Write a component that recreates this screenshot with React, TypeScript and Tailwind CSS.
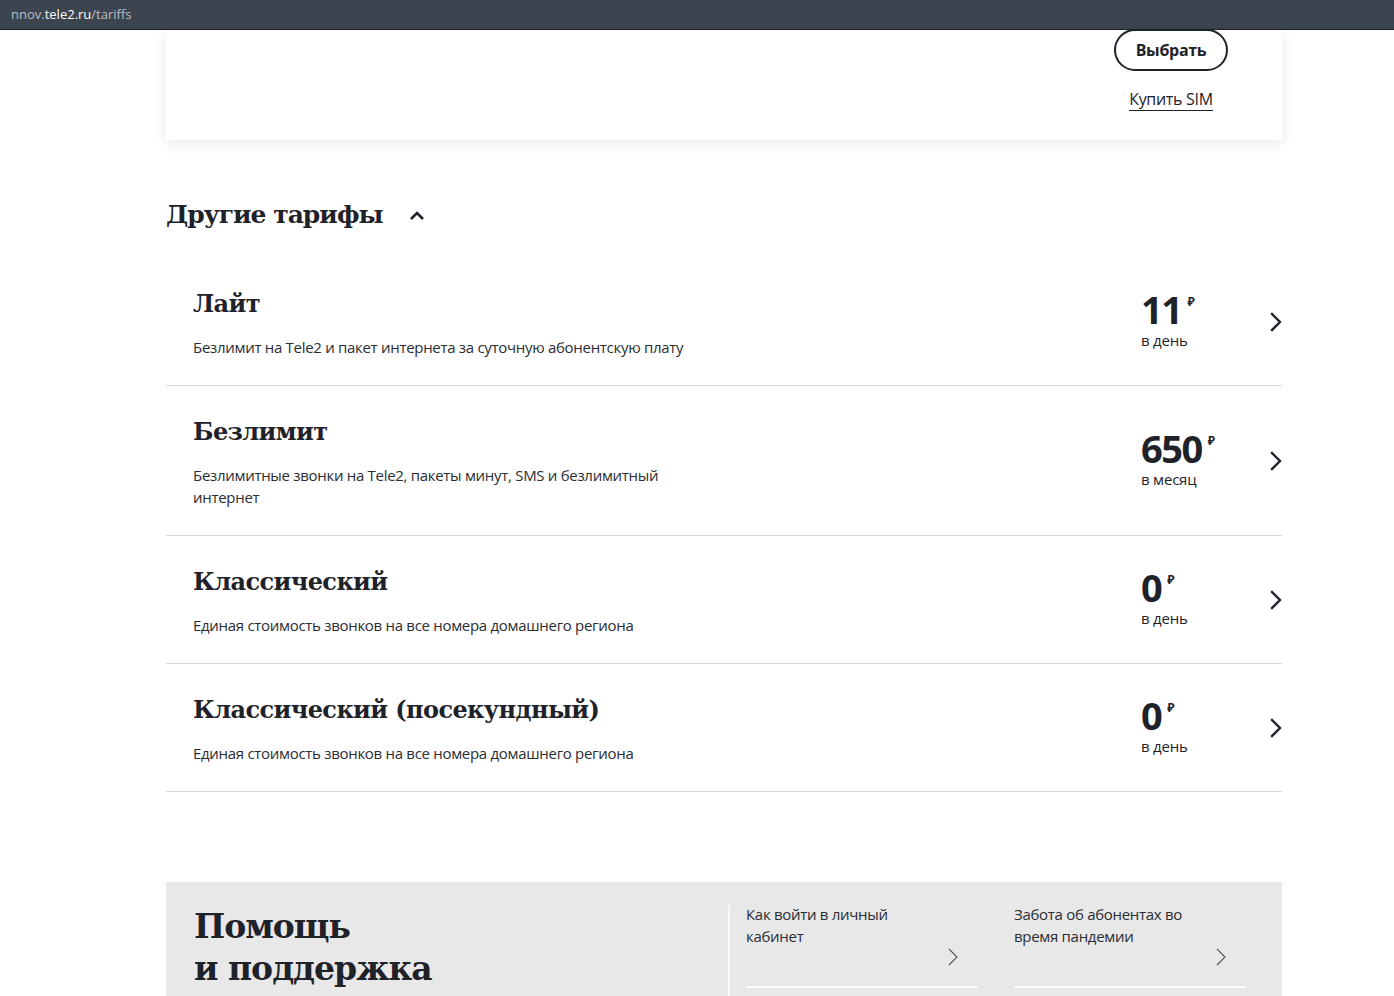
import React from "react";

const serif = { fontFamily: '"DejaVu Serif", serif' } as React.CSSProperties;

function Chevron({ className = "" }: { className?: string }) {
  return (
    <svg width="12" height="20" viewBox="0 0 12 20" className={className} fill="none">
      <path d="M2 2l8 8-8 8" stroke="#1f2229" strokeWidth="2.4" strokeLinecap="square" />
    </svg>
  );
}

function ThinChevron() {
  return (
    <svg width="10" height="18" viewBox="0 0 10 18" fill="none">
      <path d="M1 1l8 8-8 8" stroke="#555" strokeWidth="1.1" />
    </svg>
  );
}

type Tariff = { title: string; desc: string; price: string; per: string };

const tariffs: Tariff[] = [
  { title: "Лайт", desc: "Безлимит на Tele2 и пакет интернета за суточную абонентскую плату", price: "11", per: "в день" },
  { title: "Безлимит", desc: "Безлимитные звонки на Tele2, пакеты минут, SMS и безлимитный интернет", price: "650", per: "в месяц" },
  { title: "Классический", desc: "Единая стоимость звонков на все номера домашнего региона", price: "0", per: "в день" },
  { title: "Классический (посекундный)", desc: "Единая стоимость звонков на все номера домашнего региона", price: "0", per: "в день" },
];

export default function App() {
  return (
    <div className="min-h-[996px] bg-white text-[#1f2229]" style={{ fontFamily: '"Open Sans", "Noto Sans", sans-serif' }}>
      <div className="h-[30px] bg-[#3c4450] border-b border-[#1d2128] flex items-center pl-[11px] text-[13px] text-[#b9bec6]">
        <span>nnov.</span>
        <span className="text-white">tele2.ru</span>
        <span>/tariffs</span>
      </div>

      <div className="ml-[166px] w-[1116px]">
        <div className="bg-white h-[110px] shadow-[0_4px_14px_rgba(0,0,0,0.09)] flex justify-end pr-[54px]">
          <div className="flex flex-col items-center -mt-[1px]">
            <button className="w-[114px] h-[42px] rounded-full border-2 border-[#1f2229] text-[16px] font-bold tracking-[-0.3px]">Выбрать</button>
            <span className="mt-[17px] text-[16px] border-b border-[#1f2229] leading-[22px] tracking-[-0.3px]">Купить SIM</span>
          </div>
        </div>

        <div className="mt-[57px] flex items-center h-[36px]">
          <h2 className="text-[25px] font-bold tracking-[-1px]" style={serif}>Другие тарифы</h2>
          <svg width="16" height="10" viewBox="0 0 16 10" className="ml-[26px] mt-[2px]" fill="none">
            <path d="M2 8l6-6 6 6" stroke="#1f2229" strokeWidth="2.6" />
          </svg>
        </div>

        <div className="mt-[25px]">
          {tariffs.map((t) => (
            <div key={t.title} className="flex items-center border-b border-[#d9d9d9] pl-[27px]">
              <div className="flex-1 pt-[30px] pb-[27px]">
                <div className="text-[24px] font-bold leading-[32px] tracking-[-0.6px]" style={serif}>{t.title}</div>
                <div className="mt-[16px] text-[15px] leading-[22px] max-w-[510px] tracking-[-0.3px] text-[#2a2d33]">{t.desc}</div>
              </div>
              <div className="w-[129px] flex flex-col pb-[3px]">
                <div className="flex items-start h-[38px]">
                  <span className="text-[38px] font-bold leading-[38px] tracking-[-1.5px]">{t.price}</span>
                  <span className="ml-[6px] text-[12px] font-bold leading-[12px] mt-[6px]">₽</span>
                </div>
                <span className="text-[15px] leading-[20px] mt-[2px] tracking-[-0.2px]">{t.per}</span>
              </div>
              <Chevron />
            </div>
          ))}
        </div>

        <div className="mt-[90px] bg-[#e8e8e8] h-[114px] flex">
          <div className="w-[562px] pl-[28px] pt-[24px]">
            <div className="text-[33px] font-bold leading-[42px] tracking-[-1px]" style={serif}>
              Помощь
              <br />и поддержка
            </div>
          </div>
          <div className="mt-[23px] w-[2px] bg-[#f7f7f7]" />
          <div className="flex gap-[36px] pl-[16px] pt-[21px]">
            {["Как войти в личный кабинет", "Забота об абонентах во время пандемии"].map((l) => (
              <div key={l} className="w-[232px] flex flex-col">
                <div className="text-[15px] leading-[22px] max-w-[180px] tracking-[-0.3px] text-[#2a2d33]">{l}</div>
                <div className="flex justify-end pr-[20px] mt-[1px]">
                  <ThinChevron />
                </div>
                <div className="mt-[20px] h-[2px] bg-[#fafafa]" />
              </div>
            ))}
          </div>
        </div>
      </div>
    </div>
  );
}
